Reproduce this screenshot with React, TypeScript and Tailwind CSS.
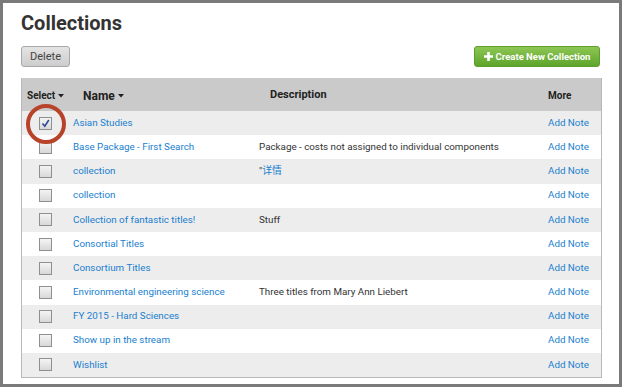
import React from "react";

type Row = { name: string; desc?: React.ReactNode; checked?: boolean };

const rows: Row[] = [
  { name: "Asian Studies", checked: true },
  { name: "Base Package - First Search", desc: "Package - costs not assigned to individual components" },
  {
    name: "collection",
    desc: (
      <>
        <span className="text-[#333]">"</span>
        <span className="text-[#1a7fcf]" style={{ fontFamily: "Roboto, 'Noto Sans CJK SC', sans-serif" }}>
          详情
        </span>
      </>
    ),
  },
  { name: "collection" },
  { name: "Collection of fantastic titles!", desc: "Stuff" },
  { name: "Consortial Titles" },
  { name: "Consortium Titles" },
  { name: "Environmental engineering science", desc: "Three titles from Mary Ann Liebert" },
  { name: "FY 2015 - Hard Sciences" },
  { name: "Show up in the stream" },
  { name: "Wishlist" },
];

function Caret() {
  return (
    <svg width="6" height="4" viewBox="0 0 6 4" className="ml-[3px] inline-block">
      <path d="M0 0h6L3 3.5z" fill="#222" />
    </svg>
  );
}

function Checkbox({ checked }: { checked?: boolean }) {
  return (
    <div className="flex h-[13px] w-[13px] items-center justify-center border border-[#8f8f8f] bg-gradient-to-b from-[#f4f4f4] to-[#d8d8d8]">
      {checked && (
        <svg width="9" height="9" viewBox="0 0 9 9">
          <path d="M1.5 4.5 L3.8 7.2 L7.8 1" fill="none" stroke="#2c4a9a" strokeWidth="1.6" />
        </svg>
      )}
    </div>
  );
}

export default function App() {
  return (
    <div
      className="relative h-[387px] w-[622px] overflow-hidden border-[3px] border-[#7a7a7a] bg-white text-[#333]"
      style={{ fontFamily: "Roboto, 'Liberation Sans', sans-serif" }}
    >
      <div className="pl-[18px] pr-[19px]">
        <h1 className="mt-[7px] h-[26px] text-[20px] font-bold leading-[26px] text-[#333]">Collections</h1>
        <div className="mt-[10px] flex items-center justify-between">
          <button className="h-[21px] w-[49px] rounded-[3px] border border-[#a8a8a8] bg-gradient-to-b from-[#e4e4e4] to-[#cdcdcd] text-[11px] leading-[19px] text-[#444]">
            Delete
          </button>
          <button className="flex h-[21px] w-[126px] items-center justify-center rounded-[3px] border border-[#5e9e2c] bg-gradient-to-b from-[#8dc653] to-[#5da42c] text-[9.5px] font-bold leading-[19px] text-white">
            <svg width="9" height="9" viewBox="0 0 9 9" className="mr-[3px]">
              <path d="M3.2 0h2.6v3.2H9v2.6H5.8V9H3.2V5.8H0V3.2h3.2z" fill="#fff" />
            </svg>
            Create New Collection
          </button>
        </div>

        <div className="mt-[11px] w-[581px] border border-t-0 border-[#b8b8b8]">
          <div className="grid h-[33px] grid-cols-[51px_186px_289px_1fr] items-center bg-[#cacaca] pt-[2px] font-bold text-[#222]">
            <div className="flex items-center pl-[5px] text-[10px]">
              Select
              <Caret />
            </div>
            <div className="flex items-center pl-[10px] text-[12px]">
              Name
              <Caret />
            </div>
            <div className="pl-[11px] text-[11px]">Description</div>
            <div className="pl-0 text-[10px]">More</div>
          </div>
          {rows.map((r, i) => (
            <div
              key={i}
              className={`grid h-[24.2px] grid-cols-[51px_186px_289px_1fr] items-center text-[9.8px] ${
                i % 2 === 0 ? "bg-[#ededed]" : "bg-white"
              }`}
            >
              <div className="pl-[17px]">
                <Checkbox checked={r.checked} />
              </div>
              <div className="whitespace-nowrap text-[#1a7fcf]">{r.name}</div>
              <div className="whitespace-nowrap text-[#333]">{r.desc}</div>
              <div className="whitespace-nowrap text-[#1a7fcf]">Add Note</div>
            </div>
          ))}
        </div>
      </div>

      {/* annotation circle */}
      <div className="absolute left-[23px] top-[101px] h-[40px] w-[40px] rounded-full border-[4px] border-[#b8432b]" />
    </div>
  );
}
